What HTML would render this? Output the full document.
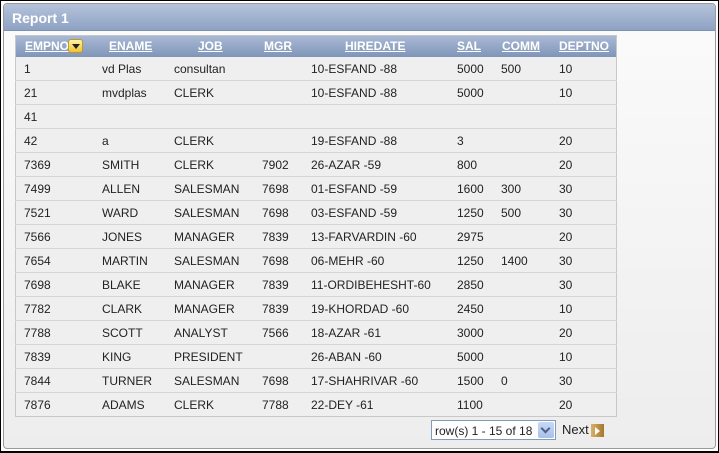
<!DOCTYPE html>
<html><head><meta charset="utf-8"><style>
*{margin:0;padding:0;box-sizing:border-box}
body{width:719px;height:453px;background:#fff;font-family:"Liberation Sans",Arial,sans-serif;font-size:12px;color:#222;position:relative;overflow:hidden}
#frame{position:absolute;left:0;top:0;width:719px;height:453px;border:1px solid #000;border-bottom:2px solid #000}
#panel{position:absolute;left:3px;top:3px;width:713px;height:446px;border:1px solid #9a9a9a;border-radius:4px;background:linear-gradient(#fbfbfb,#ededed);overflow:hidden}
#hdr{position:absolute;left:0;top:0;width:100%;height:27px;background:linear-gradient(#b5c3db,#8ea2c3);border-bottom:1px solid #7f92b3}
#hdr span{position:absolute;left:8px;top:6px;color:#fff;font-weight:bold;font-size:14px}
#tbl{position:absolute;left:15px;top:35px;width:602px;height:382px;border:1px solid #c8c8c8;background:#efefef}
#th{position:absolute;left:0;top:0;width:100%;height:21px;background:linear-gradient(#a9b9d5,#7f95b8)}
.h{position:absolute;top:3px;color:#fff;font-weight:bold;text-decoration:underline;white-space:nowrap}
.r{position:absolute;left:0;width:100%;height:24px;border-bottom:1px solid #d5d5d5}
.c{position:absolute;top:5px;white-space:nowrap}
#icon{position:absolute;left:52px;top:3px;width:15px;height:14px;background:linear-gradient(#fff2a8,#f2c230);border:1px solid #b99a2a;border-radius:3px}
#icon:after{content:"";position:absolute;left:3px;top:4px;border-left:4px solid transparent;border-right:4px solid transparent;border-top:5px solid #222}
#sel{position:absolute;left:431px;top:420px;width:125px;height:20px;border:1px solid #7f9db9;background:#fff;font-size:12px}
#sel span{position:absolute;left:3px;top:3px;white-space:nowrap}
#sel i{position:absolute;right:1px;top:1px;width:16px;height:16px;background:linear-gradient(#c8d8f6,#a9c0ea);border-radius:2px}
#sel i:after{content:"";position:absolute;left:4px;top:3px;width:5px;height:5px;border-right:2px solid #4d6185;border-bottom:2px solid #4d6185;transform:rotate(45deg)}
#next{position:absolute;left:562px;top:422px;font-size:13px}
#arr{position:absolute;left:591px;top:424px;width:13px;height:13px;background:linear-gradient(90deg,#d8b168,#a4772c)}
#arr:after{content:"";position:absolute;left:4px;top:3px;border-top:4px solid transparent;border-bottom:4px solid transparent;border-left:5px solid #fff}
</style></head><body>
<div id="frame"></div>
<div id="panel"><div id="hdr"><span>Report 1</span></div></div>
<div id="tbl">
<div id="th">
<span class="h" style="left:9px">EMPNO</span><div id="icon"></div>
<span class="h" style="left:93px">ENAME</span>
<span class="h" style="left:182px">JOB</span>
<span class="h" style="left:248px">MGR</span>
<span class="h" style="left:329px">HIREDATE</span>
<span class="h" style="left:441px">SAL</span>
<span class="h" style="left:486px">COMM</span>
<span class="h" style="left:543px">DEPTNO</span>
</div>
</div>
<div id="sel"><span>row(s) 1 - 15 of 18</span><i></i></div>
<div id="next">Next</div><div id="arr"></div>
<div id="data" style="position:absolute;left:15px;top:35px;width:602px">
<div class="r" style="top:22px"><span class="c" style="left:9px">1</span><span class="c" style="left:87px">vd Plas</span><span class="c" style="left:159px">consultan</span><span class="c" style="left:296px">10-ESFAND -88</span><span class="c" style="left:442px">5000</span><span class="c" style="left:486px">500</span><span class="c" style="left:544px">10</span></div>
<div class="r" style="top:46px"><span class="c" style="left:9px">21</span><span class="c" style="left:87px">mvdplas</span><span class="c" style="left:159px">CLERK</span><span class="c" style="left:296px">10-ESFAND -88</span><span class="c" style="left:442px">5000</span><span class="c" style="left:544px">10</span></div>
<div class="r" style="top:70px"><span class="c" style="left:9px">41</span></div>
<div class="r" style="top:94px"><span class="c" style="left:9px">42</span><span class="c" style="left:87px">a</span><span class="c" style="left:159px">CLERK</span><span class="c" style="left:296px">19-ESFAND -88</span><span class="c" style="left:442px">3</span><span class="c" style="left:544px">20</span></div>
<div class="r" style="top:118px"><span class="c" style="left:9px">7369</span><span class="c" style="left:87px">SMITH</span><span class="c" style="left:159px">CLERK</span><span class="c" style="left:247px">7902</span><span class="c" style="left:296px">26-AZAR -59</span><span class="c" style="left:442px">800</span><span class="c" style="left:544px">20</span></div>
<div class="r" style="top:142px"><span class="c" style="left:9px">7499</span><span class="c" style="left:87px">ALLEN</span><span class="c" style="left:159px">SALESMAN</span><span class="c" style="left:247px">7698</span><span class="c" style="left:296px">01-ESFAND -59</span><span class="c" style="left:442px">1600</span><span class="c" style="left:486px">300</span><span class="c" style="left:544px">30</span></div>
<div class="r" style="top:166px"><span class="c" style="left:9px">7521</span><span class="c" style="left:87px">WARD</span><span class="c" style="left:159px">SALESMAN</span><span class="c" style="left:247px">7698</span><span class="c" style="left:296px">03-ESFAND -59</span><span class="c" style="left:442px">1250</span><span class="c" style="left:486px">500</span><span class="c" style="left:544px">30</span></div>
<div class="r" style="top:190px"><span class="c" style="left:9px">7566</span><span class="c" style="left:87px">JONES</span><span class="c" style="left:159px">MANAGER</span><span class="c" style="left:247px">7839</span><span class="c" style="left:296px">13-FARVARDIN -60</span><span class="c" style="left:442px">2975</span><span class="c" style="left:544px">20</span></div>
<div class="r" style="top:214px"><span class="c" style="left:9px">7654</span><span class="c" style="left:87px">MARTIN</span><span class="c" style="left:159px">SALESMAN</span><span class="c" style="left:247px">7698</span><span class="c" style="left:296px">06-MEHR -60</span><span class="c" style="left:442px">1250</span><span class="c" style="left:486px">1400</span><span class="c" style="left:544px">30</span></div>
<div class="r" style="top:238px"><span class="c" style="left:9px">7698</span><span class="c" style="left:87px">BLAKE</span><span class="c" style="left:159px">MANAGER</span><span class="c" style="left:247px">7839</span><span class="c" style="left:296px">11-ORDIBEHESHT-60</span><span class="c" style="left:442px">2850</span><span class="c" style="left:544px">30</span></div>
<div class="r" style="top:262px"><span class="c" style="left:9px">7782</span><span class="c" style="left:87px">CLARK</span><span class="c" style="left:159px">MANAGER</span><span class="c" style="left:247px">7839</span><span class="c" style="left:296px">19-KHORDAD -60</span><span class="c" style="left:442px">2450</span><span class="c" style="left:544px">10</span></div>
<div class="r" style="top:286px"><span class="c" style="left:9px">7788</span><span class="c" style="left:87px">SCOTT</span><span class="c" style="left:159px">ANALYST</span><span class="c" style="left:247px">7566</span><span class="c" style="left:296px">18-AZAR -61</span><span class="c" style="left:442px">3000</span><span class="c" style="left:544px">20</span></div>
<div class="r" style="top:310px"><span class="c" style="left:9px">7839</span><span class="c" style="left:87px">KING</span><span class="c" style="left:159px">PRESIDENT</span><span class="c" style="left:296px">26-ABAN -60</span><span class="c" style="left:442px">5000</span><span class="c" style="left:544px">10</span></div>
<div class="r" style="top:334px"><span class="c" style="left:9px">7844</span><span class="c" style="left:87px">TURNER</span><span class="c" style="left:159px">SALESMAN</span><span class="c" style="left:247px">7698</span><span class="c" style="left:296px">17-SHAHRIVAR -60</span><span class="c" style="left:442px">1500</span><span class="c" style="left:486px">0</span><span class="c" style="left:544px">30</span></div>
<div class="r" style="top:358px;border-bottom:none"><span class="c" style="left:9px">7876</span><span class="c" style="left:87px">ADAMS</span><span class="c" style="left:159px">CLERK</span><span class="c" style="left:247px">7788</span><span class="c" style="left:296px">22-DEY -61</span><span class="c" style="left:442px">1100</span><span class="c" style="left:544px">20</span></div>
</div>
</body></html>
